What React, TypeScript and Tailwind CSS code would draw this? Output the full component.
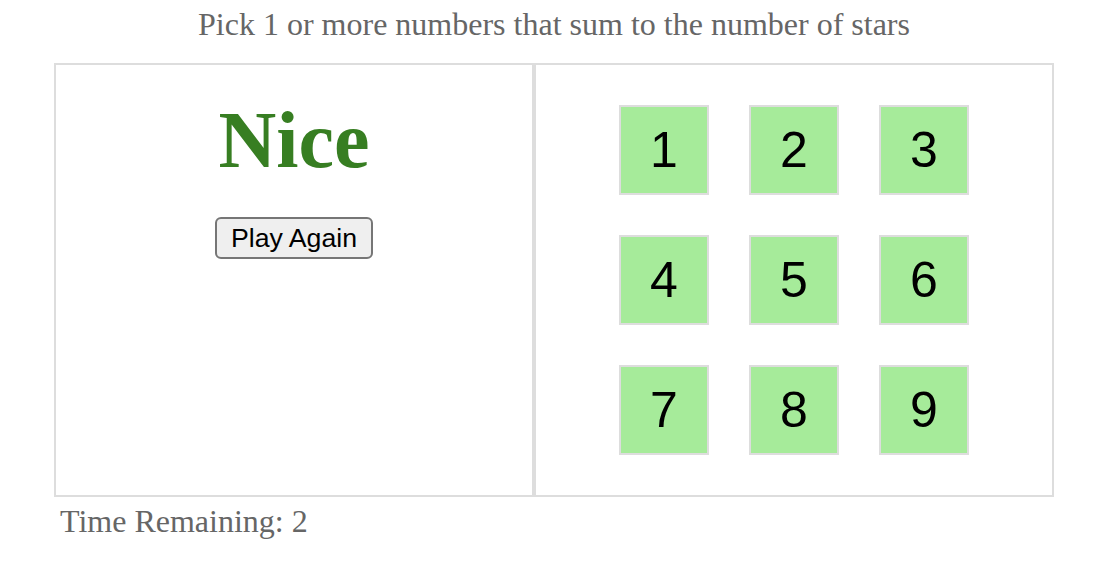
import React from "react";

export default function App() {
  const nums = [1, 2, 3, 4, 5, 6, 7, 8, 9];
  return (
    <div className="w-[1106px] h-[582px] bg-white" style={{ fontFamily: '"Liberation Serif", serif' }}>
      <div className="w-[1000px] ml-[54px]">
        <div className="text-[32px] leading-[37px] text-[#666] text-center pt-[6px] mb-[20px]">
          Pick 1 or more numbers that sum to the number of stars
        </div>
        <div className="flex">
          <div className="w-[480px] h-[434px] border-2 border-[#ddd] p-[20px] flex flex-col items-center">
            <div className="mt-[15px] text-[80px] leading-[80px] font-bold text-[#377e22]">Nice</div>
            <button
              className="mt-[37px] h-[42px] w-[158px] bg-[#efefef] border-2 border-[#767676] rounded-[6px] text-[26.7px] leading-none text-black"
              style={{ fontFamily: '"Liberation Sans", Arial, sans-serif' }}
            >
              Play Again
            </button>
          </div>
          <div className="w-[520px] h-[434px] border-2 border-[#ddd] p-[20px] flex flex-wrap justify-center content-start">
            <div className="w-[390px] flex flex-wrap">
              {nums.map((n) => (
                <div key={n} className="p-[20px]">
                  <div
                    className="w-[90px] h-[90px] bg-[#a6eb9a] border-2 border-[#ddd] flex items-center justify-center text-[50px] text-black"
                    style={{ fontFamily: '"Liberation Sans", Arial, sans-serif' }}
                  >
                    {n}
                  </div>
                </div>
              ))}
            </div>
          </div>
        </div>
        <div className="text-[32px] leading-[37px] text-[#666] mt-[6px] ml-[6px]">Time Remaining: 2</div>
      </div>
    </div>
  );
}
